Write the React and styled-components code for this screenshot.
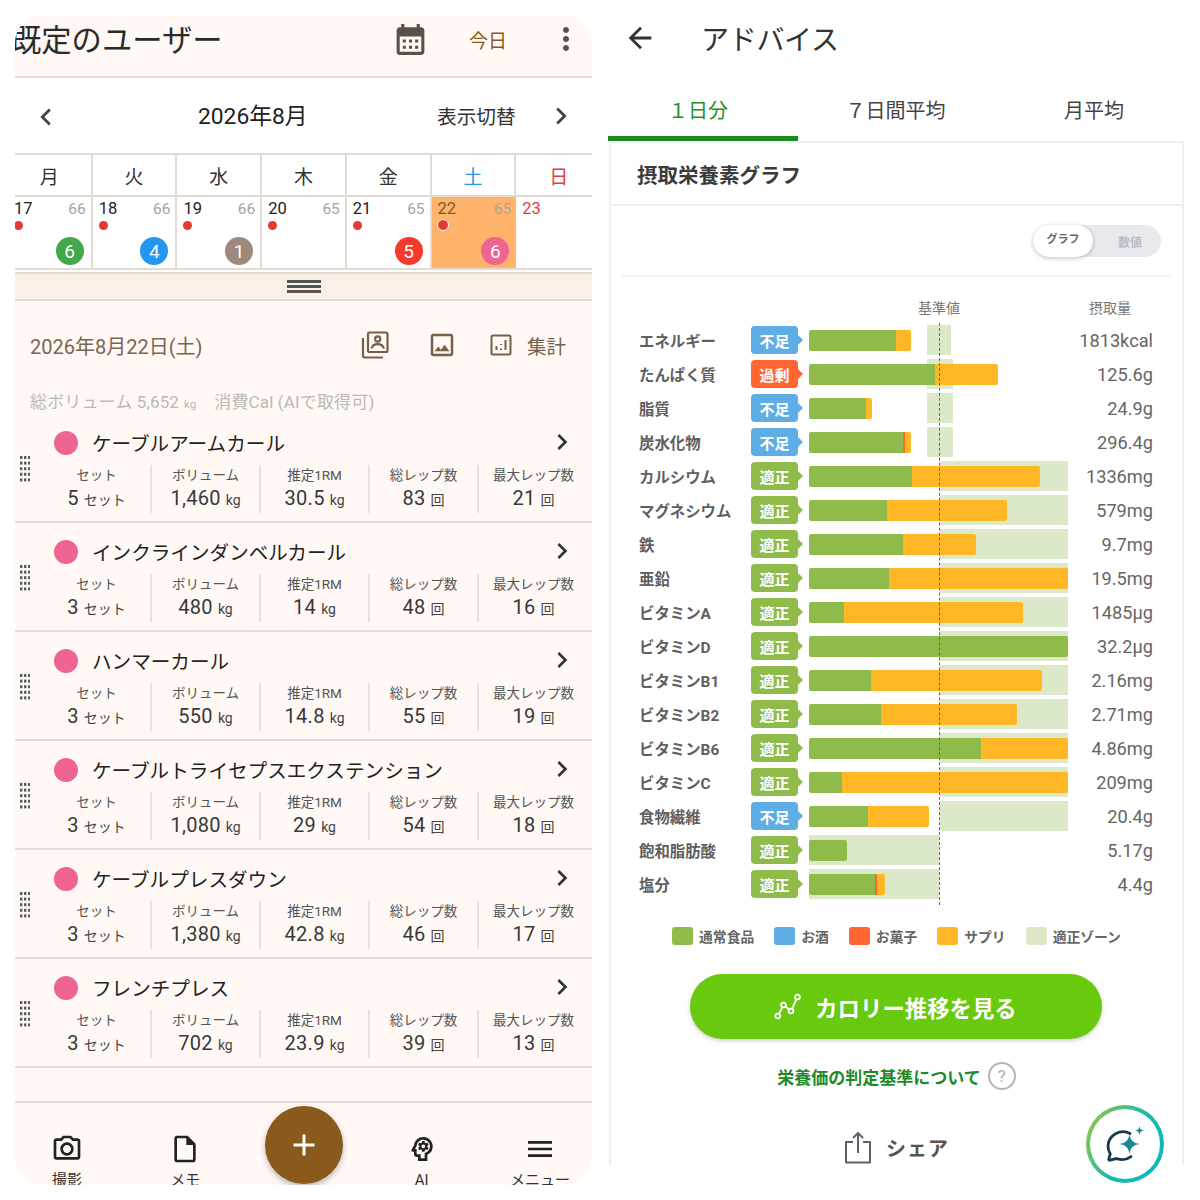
import React from 'react';
import styled, { createGlobalStyle } from 'styled-components';
import { MdCalendarMonth, MdMoreVert, MdChevronLeft, MdChevronRight, MdOutlineImage, MdOutlinePhotoCamera, MdOutlineInsertDriveFile, MdOutlinePsychology, MdMenu, MdAdd, MdArrowBack } from 'react-icons/md';

const Global = createGlobalStyle`
  html, body { margin: 0; padding: 0; background: #fff; }
  body { font-family: Roboto, "Noto Sans CJK JP", sans-serif; }
  * { box-sizing: border-box; }
`;

const Page = styled.div`
  width: 1200px; height: 1200px; padding: 15px; display: flex; gap: 16px; background: #fff; overflow: hidden;
`;
const LeftPanel = styled.div`
  position: relative; width: 577px; height: 1170px; border-radius: 28px; overflow: hidden; background: #fff8f4;
  display: flex; flex-direction: column;
`;
const Header = styled.header`
  height: 63px; flex: none; display: flex; align-items: center; padding-bottom: 10px; border-bottom: 2px solid #e3dad2; color: #333;
`;
const AppTitle = styled.h1`
  margin: 0 0 0 -4px; font-size: 30.3px; font-weight: 400; line-height: 40px; white-space: nowrap; color: #2b2b2b;
`;
const CalendarBtn = styled.span`
  margin-left: auto; display: flex; color: #5a5048; margin-top: -2px;
`;
const Today = styled.span`
  margin-left: 40px; font-size: 19px; color: #8a5a1c; width: 38px; white-space: nowrap; margin-top: -3px;
`;
const Kebab = styled.span`
  margin-left: 41px; margin-right: 8px; display: flex; color: #5a5048; margin-top: -4px;
`;
const MonthNav = styled.nav`
  height: 75px; flex: none; background: #fff; display: grid; grid-template-columns: 183px 239px 1fr; align-items: center; padding-left: 0;
`;
const NavLeft = styled.span`
  display: flex; padding: 2px 0 0 14px; color: #444;
`;
const MonthTitle = styled.span`
  font-size: 22.8px; color: #222; white-space: nowrap; margin-top: -2px;
`;
const NavRight = styled.span`
  display: flex; align-items: center; justify-content: space-between; padding: 0 14px 0 0; color: #444; font-size: 19.7px;
  span { color: #333; margin-top: -1px; }
`;
const Week = styled.div`
  height: 44px; flex: none; margin: 0 -9px 0 -7px; background: #fff; display: grid; grid-template-columns: repeat(7, 1fr);
  border-top: 2px solid #e3dad2; border-bottom: 2px solid #e3dad2;
`;
const WeekCell = styled.div`
  display: flex; align-items: center; justify-content: center; font-size: 19px; color: ${p => p.$c || '#333'};
  border-right: 2px solid #e3dad2;
  &:last-child { border-right: 0; }
`;
const Days = styled.div`
  height: 73px; flex: none; margin: 0 -9px 0 -7px; background: #fff; display: grid; grid-template-columns: repeat(7, 1fr);
  border-bottom: 2px solid #e3dad2;
`;
const DayCell = styled.div`
  position: relative; padding: 2px 5px 0 6px; background: ${p => p.$active ? '#ffb36b' : 'transparent'};
  border-right: ${p => p.$active ? 0 : '2px solid #e3dad2'};
  &:last-child { border-right: 0; }
`;
const DayTop = styled.div`
  display: flex; justify-content: space-between; font-size: 16.5px; line-height: 20px;
`;
const DayNum = styled.span`
  color: ${p => p.$c || '#222'};
`;
const DayCount = styled.span`
  color: #a5a5a5; font-size: 15.5px;
`;
const RedDot = styled.span`
  display: block; width: ${p => p.$ring ? 12 : 9}px; height: ${p => p.$ring ? 12 : 9}px; margin: ${p => p.$ring ? '0 0 0 -1px' : '2px 0 0 0'}; border-radius: 50%; background: #e53935;
  border: ${p => p.$ring ? '1.5px solid #fff' : 0};
`;
const CountBadge = styled.span`
  position: absolute; right: 7px; bottom: 3px; width: 28px; height: 28px; border-radius: 50%; color: #fff; font-size: 19px;
  display: flex; align-items: center; justify-content: center; background: ${p => p.$c};
`;
const Gap = styled.div`
  height: 2px; flex: none; background: #fff;
`;
const Handle = styled.div`
  height: 29px; flex: none; background: #f9f0e8; border-top: 2px solid #e3dad2; border-bottom: 2px solid #e3dad2;
  display: flex; flex-direction: column; align-items: center; justify-content: center; gap: 2.5px;
  i { display: block; width: 34px; height: 2.5px; background: #555; }
`;
const Summary = styled.section`
  height: 113px; flex: none; padding: 29px 26px 0 15px;
`;
const SummaryTop = styled.div`
  display: flex; align-items: center; height: 30px; color: #7a6550;
`;
const SummaryDate = styled.span`
  font-size: 20px; white-space: nowrap; width: 332px;
`;
const SummaryIcons = styled.span`
  display: flex; align-items: center; font-size: 19.5px; white-space: nowrap; color: #75604b; gap: ${p => p.$gap}px;
  svg { display: block; }
`;
const IconGap = styled.span`
  display: block; width: ${p => p.$w}px;
`;
const SummaryStat = styled.div`
  margin-top: 30px; font-size: 17px; letter-spacing: .15px; color: #bdb8b3; white-space: nowrap; line-height: 24px;
  small { font-size: 11.5px; margin: 0 18px 0 5px; letter-spacing: 0; }
`;
const ExRow = styled.article`
  height: 109px; flex: none; display: grid; grid-template-columns: 28px 545px; border-bottom: 2px solid #e3dad2;
`;
const Grip = styled.svg`
  margin: 42px 0 0 5px; display: block;
`;
const ExBody = styled.div`
  padding-top: 17px;
`;
const ExTitle = styled.div`
  height: 24px; display: flex; align-items: center; color: #222; padding: 0 10px 0 11px;
`;
const PinkDot = styled.span`
  width: 24px; height: 24px; border-radius: 50%; background: #ee6493; flex: none;
`;
const ExName = styled.span`
  margin: -2px 0 0 14px; font-size: 19.6px; flex: 1; white-space: nowrap; color: #222;
`;
const ExChevron = styled.span`
  display: flex; color: #333; margin-top: -3px;
`;
const ExStats = styled.div`
  margin-top: 10px; height: 45px; display: grid; grid-template-columns: repeat(5, 109px);
`;
const StatCell = styled.div`
  border-right: 2px solid #e9e0d8; text-align: center; color: #444; white-space: nowrap;
  &:last-child { border-right: 0; }
`;
const StatLabel = styled.div`
  font-size: 13.5px; line-height: 20px; padding-top: 0; color: #555;
`;
const StatValue = styled.div`
  font-size: 20px; line-height: 26px; color: #383838; letter-spacing: .3px;
  small { font-size: 14px; margin-left: 5px; color: #444; letter-spacing: 0; }
`;
const Blank = styled.div`
  height: 35px; flex: none; border-bottom: 2px solid #e3dad2;
`;
const BottomNav = styled.nav`
  flex: 1; margin: 0 -7px; display: grid; grid-template-columns: repeat(5, 1fr); padding-top: 32px;
`;
const NavItem = styled.div`
  display: flex; flex-direction: column; align-items: center; gap: 7px; font-size: 15px; color: #333; line-height: 20px;
  svg { display: block; color: #222; margin: -2px 0; }
`;
const Fab = styled.div`
  position: absolute; left: 250px; top: 1091px; width: 78px; height: 78px; border-radius: 50%; background: #8a5a1c; color: #fff;
  display: flex; align-items: center; justify-content: center; box-shadow: 0 3px 6px rgba(0,0,0,.25);
`;

const RightPanel = styled.div`
  position: relative; width: 577px; height: 1170px; background: #fff; display: flex; flex-direction: column; overflow: hidden;
`;
const AdviceHeader = styled.header`
  height: 70px; flex: none; display: flex; align-items: flex-start; padding: 6px 0 0 15px; color: #333;
  svg { display: block; margin-top: 0; }
`;
const AdviceTitle = styled.h1`
  margin: 1px 0 0 44px; font-size: 28px; line-height: 38px; font-weight: 400; color: #333; letter-spacing: -.3px;
`;
const Tabs = styled.div`
  height: 56px; flex: none; display: grid; grid-template-columns: 190px 200px 1fr;
`;
const Tab = styled.div`
  display: flex; align-items: center; justify-content: center; height: 56px; padding: 0 ${p => p.$pr || 0}px 3px ${p => p.$pl || 0}px; font-size: 20px; white-space: nowrap;
  color: ${p => p.$active ? '#1f8f28' : '#444'}; border-bottom: 5px solid ${p => p.$active ? '#1b8a1f' : 'transparent'};
`;
const Card = styled.section`
  margin: 0 1px; height: 1024px; flex: none; border: 2px solid #eeeef3; border-bottom: 0; display: flex; flex-direction: column; color: #444;
`;
const CardTitle = styled.h2`
  margin: 0; height: 63px; flex: none; display: flex; align-items: center; padding: 0 0 0 26px; font-size: 20.5px; font-weight: 700; color: #3a3a3a;
  border-bottom: 2px solid #eeeef3;
`;
const ToggleRow = styled.div`
  height: 71px; flex: none; margin: 0 11px; padding: 19px 10px 0 0; border-bottom: 2px solid #f2f2f4; display: flex; justify-content: flex-end;
`;
const Toggle = styled.div`
  width: 128px; height: 32px; border-radius: 16px; background: #e8e9ee; display: grid; grid-template-columns: 60px 1fr; align-items: center; text-align: center;
`;
const ToggleOn = styled.span`
  height: 32px; line-height: 30px; font-size: 11px; border-radius: 16px; background: #fff; color: #666; font-weight: 700; box-shadow: 0 1px 4px rgba(0,0,0,.25);
`;
const ToggleOff = styled.span`
  color: #b9bcc4; font-weight: 700; font-size: 12px; padding-left: 6px;
`;
const ChartHead = styled.div`
  height: 46px; flex: none; padding: 20px 0 0 307px; display: flex; font-size: 14px; line-height: 22px; color: #777;
  span:last-child { margin-left: 129px; }
`;
const ChartBody = styled.div`
  position: relative; flex: none;
`;
const BaseLine = styled.div`
  position: absolute; left: 328px; top: 0; height: 582px; border-left: 1.5px dashed #666; z-index: 2;
`;
const NRow = styled.div`
  height: 34px; display: grid; grid-template-columns: 112px 52px 259px 1fr; column-gap: 0; padding-left: 28px; align-items: center;
`;
const NLabel = styled.span`
  font-size: 15.4px; font-weight: 700; color: #5f5f5f; white-space: nowrap;
`;
const Badge = styled.span`
  position: relative; width: 47px; height: 28px; border-radius: 4px; background: ${p => p.$c}; color: #fff; font-size: 15px; font-weight: 700;
  display: flex; align-items: center; justify-content: center;
  &::after {
    content: ''; position: absolute; left: 100%; top: 9px; border-left: 5px solid ${p => p.$c}; border-top: 5px solid transparent; border-bottom: 5px solid transparent;
  }
`;
const Track = styled.div`
  position: relative; height: 34px; width: 259px; margin-left: 6px;
`;
const Zone = styled.div`
  position: absolute; top: 2px; height: 30px; background: #dce9c9;
`;
const Bar = styled.div`
  position: absolute; left: 0; top: 6.5px; height: 21px; display: flex; border-radius: 2px; overflow: hidden;
`;
const Seg = styled.i`
  display: block; height: 100%; background: ${p => p.$c};
`;
const NValue = styled.span`
  font-size: 18.2px; color: #666; text-align: right; padding-right: 29px; margin-left: 6px; white-space: nowrap;
`;
const Legend = styled.div`
  flex: none; margin-top: 25px; height: 20px; display: flex; justify-content: center; gap: 20px; font-size: 13.8px; font-weight: 700; color: #666;
`;
const LegendItem = styled.span`
  display: flex; align-items: center; gap: 6px; white-space: nowrap;
  i { display: block; width: 21px; height: 18px; border-radius: 3px; background: ${p => p.$c}; }
`;
const CtaButton = styled.div`
  flex: none; align-self: center; margin: 28px 2px 0 0; width: 412px; height: 65px; border-radius: 33px; background: #68c90f; color: #fff;
  display: flex; align-items: center; justify-content: center; gap: 14px; font-size: 22.4px; font-weight: 700; box-shadow: 0 2px 4px rgba(0,0,0,.18);
`;
const InfoLink = styled.div`
  flex: none; align-self: center; margin-top: 23px; height: 28px; display: flex; align-items: center; gap: 7px; font-size: 17px; font-weight: 700; color: #1f8a2a;
  i { width: 28px; height: 28px; border: 2px solid #b5b5b5; border-radius: 50%; color: #aaa; font-style: normal; font-size: 17px; font-weight: 400; display: flex; align-items: center; justify-content: center; }
`;
const ShareRow = styled.div`
  flex: none; align-self: center; margin-top: 41px; display: flex; align-items: center; gap: 14px; font-size: 20px; font-weight: 700; color: #555; letter-spacing: 1px;
  svg { display: block; }
`;
const ChatFab = styled.div`
  position: absolute; right: 21px; bottom: 2px; width: 78px; height: 78px; border-radius: 50%; border: 4px solid transparent;
  background: linear-gradient(#fff, #fff) padding-box, linear-gradient(120deg, #a5c736 0%, #15bcae 55%, #10b5c0 100%) border-box;
  display: flex; align-items: center; justify-content: center;
`;

const week = [['月'], ['火'], ['水'], ['木'], ['金'], ['土', '#2a97e0'], ['日', '#e53945']];
const days = [
  { n: 17, c: 66, b: 6, col: '#43a84c' }, { n: 18, c: 66, b: 4, col: '#2196f3' }, { n: 19, c: 66, b: 1, col: '#a1887f' },
  { n: 20, c: 65 }, { n: 21, c: 65, b: 5, col: '#f4392d' }, { n: 22, c: 65, b: 6, col: '#ee6493', active: true }, { n: 23, sun: true },
];
const exercises = [
  ['ケーブルアームカール', '5', '1,460', '30.5', '83', '21'],
  ['インクラインダンベルカール', '3', '480', '14', '48', '16'],
  ['ハンマーカール', '3', '550', '14.8', '55', '19'],
  ['ケーブルトライセプスエクステンション', '3', '1,080', '29', '54', '18'],
  ['ケーブルプレスダウン', '3', '1,380', '42.8', '46', '17'],
  ['フレンチプレス', '3', '702', '23.9', '39', '13'],
];
const GREEN = '#8fbb4b', ORANGE = '#ffb725', RED = '#ff6632', BLUE = '#5eaee5';
const X0 = 809;
const nutrients = [
  ['エネルギー', 'l', [896, 911], [927, 951], '1813kcal'],
  ['たんぱく質', 'o', [935, 998], [927, 953], '125.6g'],
  ['脂質', 'l', [866, 872], [927, 953], '24.9g'],
  ['炭水化物', 'l', [903, 911], [927, 953], '296.4g', true],
  ['カルシウム', 'g', [912, 1040], [940, 1068], '1336mg'],
  ['マグネシウム', 'g', [887, 1007], [940, 1068], '579mg'],
  ['鉄', 'g', [903, 976], [940, 1068], '9.7mg'],
  ['亜鉛', 'g', [889, 1068], [940, 1068], '19.5mg'],
  ['ビタミンA', 'g', [844, 1023], [940, 1068], '1485μg'],
  ['ビタミンD', 'g', [1068, 1068], [940, 1068], '32.2μg'],
  ['ビタミンB1', 'g', [871, 1042], [940, 1068], '2.16mg'],
  ['ビタミンB2', 'g', [881, 1017], [940, 1068], '2.71mg'],
  ['ビタミンB6', 'g', [981, 1068], [940, 1068], '4.86mg'],
  ['ビタミンC', 'g', [842, 1068], [940, 1068], '209mg'],
  ['食物繊維', 'l', [868, 929], [940, 1068], '20.4g'],
  ['飽和脂肪酸', 'g', [847, 847], [809, 939], '5.17g'],
  ['塩分', 'g', [875, 885], [809, 939], '4.4g', true],
];
const badge = { l: ['不足', BLUE], o: ['過剰', RED], g: ['適正', GREEN] };

const GripIcon = () => (
  <Grip width="10" height="26" viewBox="0 0 10 26">
    {[0, 1, 2, 3, 4].flatMap(r => [0, 1, 2].map(c => <rect key={`${r}${c}`} x={c * 4} y={r * 5.6} width="2.4" height="3" fill="#5c5c5c" />))}
  </Grip>
);

const PortraitIcon = () => (
  <svg width="28" height="28" viewBox="0 0 28 28" fill="none" stroke="#75604b" strokeWidth="2.2">
    <rect x="7" y="1.5" width="19.5" height="19.5" rx="1.5" />
    <circle cx="16.7" cy="8" r="2.6" />
    <path d="M10.5 17.5c.8-3 3.2-4.4 6.2-4.4s5.4 1.4 6.2 4.4" />
    <path d="M2 7v17.5a2 2 0 0 0 2 2h18" />
  </svg>
);
const BarsIcon = () => (
  <svg width="22" height="22" viewBox="0 0 22 22" fill="none" stroke="#75604b" strokeWidth="2">
    <rect x="1.5" y="1.5" width="19" height="19" rx="1.5" />
    <path d="M6.5 16v-4M11 16v-1.5M11 11V10M15.5 16V6" />
  </svg>
);
const TrendIcon = () => (
  <svg width="27" height="27" viewBox="0 0 27 27" fill="none" stroke="#fff" strokeWidth="1.8">
    <circle cx="3.8" cy="23" r="2.4" /><circle cx="9.5" cy="12" r="2.4" /><circle cx="17" cy="18" r="2.4" /><circle cx="23.5" cy="4" r="2.4" />
    <path d="M5 20.8L8.4 14.2M11.3 13.5L15.2 16.5M18 15.8L22.5 6.2" />
  </svg>
);
const ShareIcon = () => (
  <svg width="28" height="33" viewBox="0 0 28 33" fill="none" stroke="#5a6270" strokeWidth="2" strokeLinejoin="round">
    <path d="M9 11H2v20.500h24V11h-7" />
    <path d="M14 22V2M9 7l5-5 5 5" />
  </svg>
);
const ChatIcon = () => (
  <svg width="44" height="44" viewBox="0 0 44 44" fill="none">
    <path d="M27 11.500A15 15 0 0 0 5 24c0 3 .8 5.500 2.200 7.800l-1.400 5.200a1 1 0 0 0 1.300 1.200l5.900-1.600a1 1 0 0 1 .8 0 15 15 0 0 0 14.200-2" stroke="#17394a" strokeWidth="2.800" strokeLinecap="round" />
    <path d="M26.500 12c1 6.300 3.700 9 10 10-6.300 1-9 3.700-10 10-1-6.300-3.700-9-10-10 6.300-1 9-3.700 10-10z" fill="#128a92" />
    <path d="M36.500 4c.4 3 1.500 4.100 4.500 4.500-3 .4-4.100 1.500-4.500 4.500-.4-3-1.500-4.100-4.500-4.500 3-.4 4.100-1.500 4.500-4.500z" fill="#128a92" />
  </svg>
);

export default function App() {
  return (
    <>
      <Global />
      <Page>
        <LeftPanel>
          <Header>
            <AppTitle>既定のユーザー</AppTitle>
            <CalendarBtn><MdCalendarMonth size={37} /></CalendarBtn>
            <Today>今日</Today>
            <Kebab><MdMoreVert size={36} /></Kebab>
          </Header>
          <MonthNav>
            <NavLeft><MdChevronLeft size={34} /></NavLeft>
            <MonthTitle>2026年8月</MonthTitle>
            <NavRight><span>表示切替</span><MdChevronRight size={34} /></NavRight>
          </MonthNav>
          <Week>{week.map(([w, c]) => <WeekCell key={w} $c={c}>{w}</WeekCell>)}</Week>
          <Days>
            {days.map(d => (
              <DayCell key={d.n} $active={d.active}>
                <DayTop>
                  <DayNum $c={d.sun ? '#e53945' : d.active ? '#7a5a30' : undefined}>{d.n}</DayNum>
                  {d.c && <DayCount>{d.c}</DayCount>}
                </DayTop>
                {!d.sun && <RedDot $ring={d.active} />}
                {d.b && <CountBadge $c={d.col}>{d.b}</CountBadge>}
              </DayCell>
            ))}
          </Days>
          <Gap />
          <Handle><i /><i /><i /></Handle>
          <Summary>
            <SummaryTop>
              <SummaryDate>2026年8月22日(土)</SummaryDate>
              <SummaryIcons>
                <PortraitIcon />
                <IconGap $w={38} />
                <MdOutlineImage size={30} />
                <IconGap $w={33} />
                <BarsIcon />
                <IconGap $w={15} />
                集計
              </SummaryIcons>
            </SummaryTop>
            <SummaryStat>総ボリューム 5,652<small>kg</small>消費Cal (AIで取得可)</SummaryStat>
          </Summary>
          {exercises.map(e => (
            <ExRow key={e[0]}>
              <GripIcon />
              <ExBody>
                <ExTitle>
                  <PinkDot />
                  <ExName>{e[0]}</ExName>
                  <ExChevron><MdChevronRight size={32} /></ExChevron>
                </ExTitle>
                <ExStats>
                  <StatCell><StatLabel>セット</StatLabel><StatValue>{e[1]}<small>セット</small></StatValue></StatCell>
                  <StatCell><StatLabel>ボリューム</StatLabel><StatValue>{e[2]}<small>kg</small></StatValue></StatCell>
                  <StatCell><StatLabel>推定1RM</StatLabel><StatValue>{e[3]}<small>kg</small></StatValue></StatCell>
                  <StatCell><StatLabel>総レップ数</StatLabel><StatValue>{e[4]}<small>回</small></StatValue></StatCell>
                  <StatCell><StatLabel>最大レップ数</StatLabel><StatValue>{e[5]}<small>回</small></StatValue></StatCell>
                </ExStats>
              </ExBody>
            </ExRow>
          ))}
          <Blank />
          <BottomNav>
            <NavItem><MdOutlinePhotoCamera size={32} />撮影</NavItem>
            <NavItem><MdOutlineInsertDriveFile size={32} />メモ</NavItem>
            <NavItem />
            <NavItem><MdOutlinePsychology size={32} />AI</NavItem>
            <NavItem><MdMenu size={32} />メニュー</NavItem>
          </BottomNav>
          <Fab><MdAdd size={36} /></Fab>
        </LeftPanel>

        <RightPanel>
          <AdviceHeader>
            <MdArrowBack size={34} />
            <AdviceTitle>アドバイス</AdviceTitle>
          </AdviceHeader>
          <Tabs>
            <Tab $active $pr={10}>１日分</Tab>
            <Tab $pr={5}>７日間平均</Tab>
            <Tab $pl={5}>月平均</Tab>
          </Tabs>
          <Card>
            <CardTitle>摂取栄養素グラフ</CardTitle>
            <ToggleRow>
              <Toggle><ToggleOn>グラフ</ToggleOn><ToggleOff>数値</ToggleOff></Toggle>
            </ToggleRow>
            <ChartHead><span>基準値</span><span>摂取量</span></ChartHead>
            <ChartBody>
              <BaseLine />
              {nutrients.map(([name, st, [a, b], [z1, z2], val, thin]) => (
                <NRow key={name}>
                  <NLabel>{name}</NLabel>
                  <Badge $c={badge[st][1]}>{badge[st][0]}</Badge>
                  <Track>
                    <Zone style={{ left: z1 - X0, width: z2 - z1 }} />
                    <Bar style={{ width: b - X0 }}>
                      <Seg $c={GREEN} style={{ width: a - X0 }} />
                      {thin && <Seg $c={RED} style={{ width: 2 }} />}
                      <Seg $c={ORANGE} style={{ flex: 1 }} />
                    </Bar>
                  </Track>
                  <NValue>{val}</NValue>
                </NRow>
              ))}
            </ChartBody>
            <Legend>
              <LegendItem $c={GREEN}><i />通常食品</LegendItem>
              <LegendItem $c={BLUE}><i />お酒</LegendItem>
              <LegendItem $c={RED}><i />お菓子</LegendItem>
              <LegendItem $c={ORANGE}><i />サプリ</LegendItem>
              <LegendItem $c="#dce9c9"><i />適正ゾーン</LegendItem>
            </Legend>
            <CtaButton><TrendIcon />カロリー推移を見る</CtaButton>
            <InfoLink>栄養価の判定基準について<i>?</i></InfoLink>
            <ShareRow><ShareIcon />シェア</ShareRow>
          </Card>
          <ChatFab><ChatIcon /></ChatFab>
        </RightPanel>
      </Page>
    </>
  );
}
